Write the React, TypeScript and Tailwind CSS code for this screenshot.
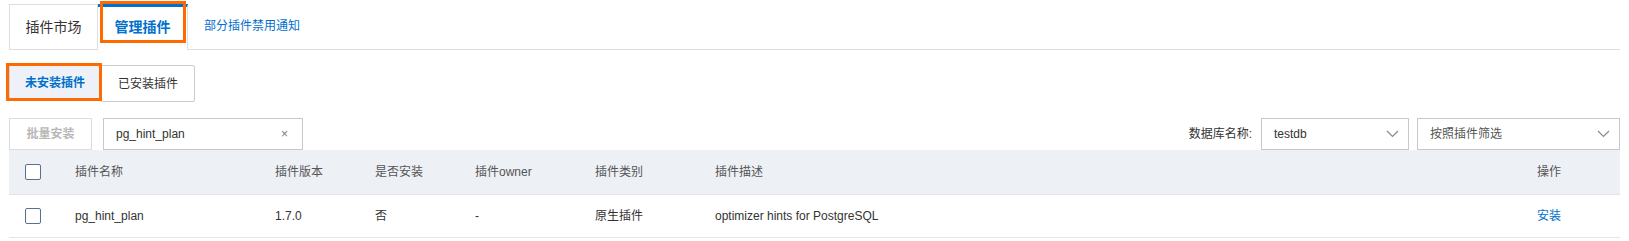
import React from "react";

const font = { fontFamily: '"Liberation Sans", "Noto Sans CJK SC", sans-serif' };

function Chevron() {
  return (
    <svg width="13" height="8" viewBox="0 0 13 8" className="shrink-0">
      <polyline points="1,1 6.5,6.5 12,1" fill="none" stroke="#8a8a8a" strokeWidth="1.2" />
    </svg>
  );
}

function Checkbox() {
  return <div className="w-4 h-4 border border-[#5a6f8f] rounded-[2px] bg-white" />;
}

const cols = [
  "w-[66px] pl-4",
  "w-[200px]",
  "w-[100px]",
  "w-[100px]",
  "w-[120px]",
  "w-[120px]",
  "w-[822px]",
  "flex-1",
];

export default function App() {
  const header = ["插件名称", "插件版本", "是否安装", "插件owner", "插件类别", "插件描述", "操作"];
  const row = ["pg_hint_plan", "1.7.0", "否", "-", "原生插件", "optimizer hints for PostgreSQL"];
  return (
    <div className="w-[1629px] h-[241px] bg-white px-[9px] pt-[4px] text-[12px] text-[#333]" style={font}>
      {/* Tabs */}
      <div className="flex h-[46px]">
        <div className="w-[89px] h-full border border-[#dedede] flex items-center justify-center text-[14px] text-[#333]">
          插件市场
        </div>
        <div className="relative w-[90px] h-full border-t-[3px] border-t-[#0070cc] border-r border-r-[#dedede] bg-white flex items-center justify-center text-[14px] font-bold text-[#0070cc] pb-[3px]">
          管理插件
          <div className="absolute left-[2px] top-[-6px] w-[86px] h-[42px] border-[3px] border-[#ff6a00]" />
        </div>
        <div className="flex-1 h-full border-b border-[#dedede] flex items-center pl-4 text-[12px] text-[#0070cc] pb-[2px]">
          部分插件禁用通知
        </div>
      </div>

      {/* Sub buttons */}
      <div className="flex mt-[15px]">
        <div className="relative w-[92px] h-[36px] bg-[#eef2f8] border border-[#cfd5de] flex items-center justify-center font-bold text-[#0070cc]">
          未安装插件
          <div className="absolute left-[-4px] top-[-3px] w-[96px] h-[38px] border-[3px] border-[#ff6a00]" />
        </div>
        <div className="w-[94px] h-[37px] border border-[#cccccc] rounded-r-[2px] flex items-center justify-center text-[#333]">
          已安装插件
        </div>
      </div>

      {/* Toolbar */}
      <div className="flex items-center mt-[16px] h-[32px]">
        <div className="w-[83px] h-full border border-[#dcdcdc] flex items-center justify-center text-[#b8b8b8] font-bold">
          批量安装
        </div>
        <div className="ml-[11px] w-[200px] h-full border border-[#c8c8c8] flex items-center pl-[12px] pr-[14px] justify-between text-[#333]">
          <span>pg_hint_plan</span>
          <span className="text-[#777] text-[12px]">×</span>
        </div>
        <div className="flex-1" />
        <div className="text-[#333] mr-[9px]">数据库名称:</div>
        <div className="w-[148px] h-full border border-[#c8c8c8] flex items-center justify-between pl-[12px] pr-[9px]">
          <span>testdb</span>
          <Chevron />
        </div>
        <div className="ml-[8px] w-[203px] h-full border border-[#c8c8c8] flex items-center justify-between pl-[12px] pr-[9px]">
          <span className="text-[#555]">按照插件筛选</span>
          <Chevron />
        </div>
      </div>

      {/* Table */}
      <div>
        <div className="flex items-center h-[45px] bg-[#edf0f5] border-b border-[#e2e4e8] text-[#555]">
          <div className={cols[0]}>
            <Checkbox />
          </div>
          {header.map((h, i) => (
            <div key={h} className={cols[i + 1]}>
              {h}
            </div>
          ))}
        </div>
        <div className="flex items-center h-[43px] border-b border-[#e5e5e5] text-[#333]">
          <div className={cols[0]}>
            <Checkbox />
          </div>
          {row.map((c, i) => (
            <div key={i} className={cols[i + 1]}>
              {c}
            </div>
          ))}
          <div className={cols[7] + " text-[#0070cc]"}>安装</div>
        </div>
      </div>
    </div>
  );
}
